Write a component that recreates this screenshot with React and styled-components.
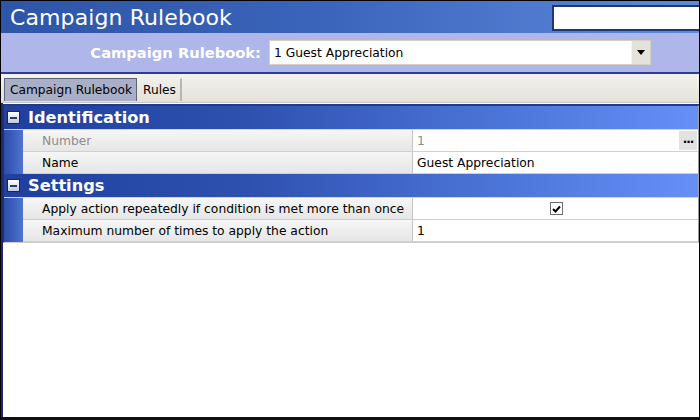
import React from "react";
import styled, { createGlobalStyle } from "styled-components";

const Global = createGlobalStyle`
    html, body {
        margin: 0;
        padding: 0;
        background: #000;
    }
    #root {
        width: 700px;
        height: 420px;
    }
`;

const Window = styled.div`
    width: 700px;
    height: 420px;
    box-sizing: border-box;
    border-top: 1px solid #000;
    border-left: 1px solid #000;
    border-right: 1px solid #000;
    border-bottom: 3px solid #111;
    display: flex;
    flex-direction: column;
    font-family: "DejaVu Sans", Verdana, sans-serif;
    overflow: hidden;
    background: #fff;
`;

const TitleBar = styled.div`
    height: 32px;
    flex: none;
    display: flex;
    align-items: center;
    justify-content: space-between;
    padding-left: 9px;
    background: linear-gradient(to right, #2d55a8 0%, #3a64b9 45%, #5e89dd 100%);
`;

const Title = styled.h1`
    margin: 0;
    font-size: 22px;
    font-weight: normal;
    color: #fff;
    letter-spacing: 0.1px;
`;

const SearchBox = styled.div`
    width: 145px;
    height: 22px;
    margin-top: 1px;
    background: #fff;
    border: 2px solid #1c3878;
    border-right: none;
`;

const FilterBar = styled.div`
    height: 39px;
    flex: none;
    display: flex;
    align-items: center;
    padding-left: 89px;
    gap: 8px;
    background: #aeb6ea;
    border-bottom: 2px solid #2b3f8e;
`;

const FilterLabel = styled.label`
    font-size: 14.7px;
    font-weight: bold;
    color: #fff;
    width: 171px;
    text-align: right;
    white-space: nowrap;
`;

const Select = styled.div`
    width: 382px;
    height: 25px;
    box-sizing: border-box;
    display: flex;
    align-items: stretch;
    background: #fff;
    border: 1px solid #d4d0c4;
`;

const SelectText = styled.span`
    flex: 1;
    display: flex;
    align-items: center;
    padding-left: 4px;
    font-size: 12.3px;
    color: #000;
`;

const DropButton = styled.span`
    width: 18px;
    display: flex;
    align-items: center;
    justify-content: center;
    background: #e4e2da;
    border-left: 1px solid #f4f3ee;
`;

const Arrow = styled.span`
    width: 0;
    height: 0;
    border-left: 4px solid transparent;
    border-right: 4px solid transparent;
    border-top: 5px solid #000;
`;

const TabStrip = styled.div`
    height: 28px;
    flex: none;
    display: flex;
    align-items: flex-end;
    padding-left: 3px;
    background: linear-gradient(#f3f2ee, #e3e1d9);
    border-bottom: 1px solid #c9c6bc;
`;

const Tab = styled.div`
    height: 23px;
    box-sizing: border-box;
    display: flex;
    align-items: center;
    padding: 0 4px 0 5px;
    font-size: 12.2px;
    color: #000;
    background: ${(p) => (p.$active ? "#a9afc6" : "transparent")};
    border: 1px solid ${(p) => (p.$active ? "#5e6478" : "transparent")};
    border-bottom: none;
    border-right: ${(p) => (p.$active ? "1px solid #5e6478" : "2px solid #b9b6ab")};
    margin-bottom: 1px;
`;

const Body = styled.div`
    flex: 1;
    background: #fff;
    border-left: 2px solid #1e2c66;
    padding-top: 1px;
`;

const Grid = styled.div`
    width: 694px;
    border-top: 2px solid #213b8a;
    border-left: 1px solid #1b3384;
    border-right: 2px solid #9c9c9c;
    border-bottom: 1px solid #d0cec8;
`;

const Category = styled.div`
    height: 23px;
    display: flex;
    align-items: stretch;
    background: linear-gradient(to right, #1e3f9e 0%, #2e51b0 35%, #4f78dc 75%, #6790f7 100%);
    border-bottom: 1px solid #d7d5cf;
`;

const CatGutter = styled.div`
    width: 19px;
    flex: none;
    display: flex;
    align-items: center;
    justify-content: center;
    background: #23409c;
`;

const MinusBox = styled.span`
    width: 13px;
    height: 13px;
    box-sizing: border-box;
    border: 1px solid #17275a;
    background: linear-gradient(#ffffff, #c2c9dc);
    display: flex;
    align-items: center;
    justify-content: center;
    &::before {
        content: "";
        width: 7px;
        height: 2px;
        background: #2a3a6a;
    }
`;

const CatTitle = styled.span`
    display: flex;
    align-items: center;
    padding-left: 5px;
    font-size: 16.2px;
    font-weight: bold;
    color: #fff;
`;

const Row = styled.div`
    height: 22px;
    display: flex;
    align-items: stretch;
`;

const Gutter = styled.div`
    width: 19px;
    flex: none;
    background: linear-gradient(to right, #2c4ca8, #4f74d2);
`;

const Label = styled.div`
    width: 370px;
    flex: none;
    display: flex;
    align-items: center;
    padding-left: 19px;
    font-size: 12.3px;
    white-space: nowrap;
    overflow: hidden;
    color: ${(p) => (p.$disabled ? "#8c8c8c" : "#000")};
    background: linear-gradient(#f6f6f6, #e6e6e6);
    border-bottom: 1px solid #d2d0ca;
    border-right: 1px solid #c4c4c4;
`;

const Value = styled.div`
    flex: 1;
    display: flex;
    align-items: center;
    justify-content: ${(p) => (p.$center ? "center" : "flex-start")};
    padding-left: ${(p) => (p.$center ? "0" : "4px")};
    font-size: 12.3px;
    color: ${(p) => (p.$disabled ? "#8c8c8c" : "#000")};
    background: #fff;
    border-bottom: 1px solid #d2d0ca;
`;

const ValueText = styled.span`
    flex: 1;
`;

const Ellipsis = styled.span`
    width: 18px;
    align-self: stretch;
    margin: 1px 1px 1px 0;
    display: flex;
    align-items: center;
    justify-content: center;
    background: #e2e2e2;
    color: #000;
    font-weight: bold;
    font-size: 12px;
    letter-spacing: -1px;
    padding-bottom: 4px;
    box-sizing: border-box;
`;

const Check = styled.span`
    width: 13px;
    height: 13px;
    box-sizing: border-box;
    border: 1px solid #6c6c6c;
    background: #fff;
    display: flex;
    align-items: center;
    justify-content: center;
    margin-left: 2px;
`;

const CheckMark = () => (
    <svg width="9" height="8" viewBox="0 0 9 8">
        <path d="M1 4 L3.5 6.5 L8 1.5" fill="none" stroke="#000" strokeWidth="2" />
    </svg>
);

const sections = [
    {
        title: "Identification",
        rows: [
            { label: "Number", value: "1", disabled: true, ellipsis: true },
            { label: "Name", value: "Guest Appreciation" },
        ],
    },
    {
        title: "Settings",
        rows: [
            { label: "Apply action repeatedly if condition is met more than once", check: true },
            { label: "Maximum number of times to apply the action", value: "1" },
        ],
    },
];

export default function App() {
    return (
        <>
            <Global />
            <Window>
                <TitleBar>
                    <Title>Campaign Rulebook</Title>
                    <SearchBox />
                </TitleBar>
                <FilterBar>
                    <FilterLabel>Campaign Rulebook:</FilterLabel>
                    <Select>
                        <SelectText>1 Guest Appreciation</SelectText>
                        <DropButton>
                            <Arrow />
                        </DropButton>
                    </Select>
                </FilterBar>
                <TabStrip>
                    <Tab $active>Campaign Rulebook</Tab>
                    <Tab>Rules</Tab>
                </TabStrip>
                <Body>
                    <Grid>
                        {sections.map((s) => (
                            <React.Fragment key={s.title}>
                                <Category>
                                    <CatGutter>
                                        <MinusBox />
                                    </CatGutter>
                                    <CatTitle>{s.title}</CatTitle>
                                </Category>
                                {s.rows.map((r) => (
                                    <Row key={r.label}>
                                        <Gutter />
                                        <Label $disabled={r.disabled}>{r.label}</Label>
                                        {r.check ? (
                                            <Value $center>
                                                <Check>
                                                    <CheckMark />
                                                </Check>
                                            </Value>
                                        ) : (
                                            <Value $disabled={r.disabled}>
                                                <ValueText>{r.value}</ValueText>
                                                {r.ellipsis && <Ellipsis>...</Ellipsis>}
                                            </Value>
                                        )}
                                    </Row>
                                ))}
                            </React.Fragment>
                        ))}
                    </Grid>
                </Body>
            </Window>
        </>
    );
}
